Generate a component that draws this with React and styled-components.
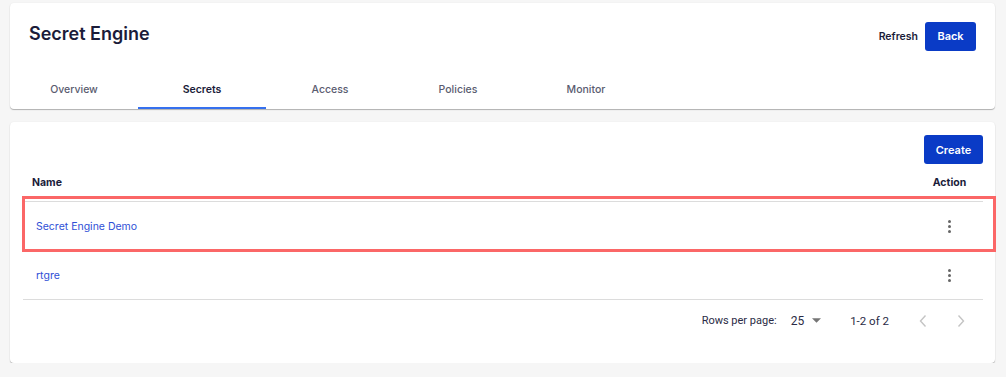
import React from 'react';
import styled, { createGlobalStyle } from 'styled-components';

const GlobalStyle = createGlobalStyle`
  body {
    margin: 0;
    background: #f6f6f6;
    font-family: Inter, "Liberation Sans", sans-serif;
    color: #1b1c3a;
  }
`;

const tabs = ['Overview', 'Secrets', 'Access', 'Policies', 'Monitor'];

const secrets = [
  { name: 'Secret Engine Demo', highlighted: true },
  { name: 'rtgre', highlighted: false },
];

const App = () => {
  return (
    <>
      <GlobalStyle />
      <StyledPage>
        <StyledCard>
          <StyledTopRow>
            <StyledTitle>Secret Engine</StyledTitle>
            <StyledActions>
              <StyledTextButton>Refresh</StyledTextButton>
              <StyledPrimaryButton>Back</StyledPrimaryButton>
            </StyledActions>
          </StyledTopRow>
          <StyledTabs>
            {tabs.map(tab => (
              <StyledTab key={tab} active={tab === 'Secrets'}>
                {tab}
              </StyledTab>
            ))}
          </StyledTabs>
        </StyledCard>

        <StyledTableCard>
          <StyledToolbar>
            <StyledPrimaryButton wide>Create</StyledPrimaryButton>
          </StyledToolbar>
          <StyledHeadRow>
            <StyledHeadCell>Name</StyledHeadCell>
            <StyledHeadCell align="center">Action</StyledHeadCell>
          </StyledHeadRow>
          {secrets.map(secret => (
            <StyledRow key={secret.name} highlighted={secret.highlighted}>
              <StyledLink>{secret.name}</StyledLink>
              <StyledKebab aria-label="more">
                <span />
                <span />
                <span />
              </StyledKebab>
            </StyledRow>
          ))}
          <StyledPagination>
            <span>Rows per page:</span>
            <StyledSelect>
              25
              <svg width="9" height="5" viewBox="0 0 10 5">
                <path d="M0 0 L10 0 L5 5 Z" fill="#757575" />
              </svg>
            </StyledSelect>
            <StyledRange>1-2 of 2</StyledRange>
            <StyledPager>
              <StyledArrow aria-label="previous">
                <svg width="10" height="14" viewBox="0 0 10 14">
                  <path d="M7.5 1.5 L2.5 7 L7.5 12.5" fill="none" stroke="#c4c4c4" strokeWidth="1.4" />
                </svg>
              </StyledArrow>
              <StyledArrow aria-label="next">
                <svg width="10" height="14" viewBox="0 0 10 14">
                  <path d="M2.5 1.5 L7.5 7 L2.5 12.5" fill="none" stroke="#c4c4c4" strokeWidth="1.4" />
                </svg>
              </StyledArrow>
            </StyledPager>
          </StyledPagination>
        </StyledTableCard>
      </StyledPage>
    </>
  );
};

const StyledPage = styled.div`
  display: flex;
  flex-direction: column;
  gap: 13px;
  padding: 3px 11px 0 10px;
`;

const StyledCard = styled.div`
  background: #ffffff;
  border-radius: 4px;
  box-shadow: 0 1px 1px rgba(0, 0, 0, 0.28), 0 0 2px rgba(0, 0, 0, 0.06);
  height: 106px;
  display: flex;
  flex-direction: column;
`;

const StyledTopRow = styled.div`
  height: 66px;
  display: flex;
  align-items: center;
  justify-content: space-between;
  padding: 0 19px;
`;

const StyledTitle = styled.h1`
  margin: -6px 0 0;
  font-size: 18px;
  font-weight: 600;
  color: #1b1c3a;
`;

const StyledActions = styled.div`
  display: flex;
  align-items: center;
  gap: 7px;
`;

const StyledTextButton = styled.button`
  border: none;
  background: none;
  padding: 0;
  font-family: inherit;
  font-size: 10.5px;
  font-weight: 600;
  color: #1b1c3a;
`;

const StyledPrimaryButton = styled.button`
  border: none;
  border-radius: 3px;
  background: #0a3bc6;
  color: #ffffff;
  font-family: inherit;
  font-size: 11px;
  font-weight: 600;
  height: 29px;
  width: ${props => (props.wide ? '59px' : '51px')};
  padding: 0;
`;

const StyledTabs = styled.div`
  display: flex;
  height: 40px;
`;

const StyledTab = styled.div`
  width: 128px;
  display: flex;
  align-items: center;
  justify-content: center;
  font-size: 10.5px;
  font-weight: ${props => (props.active ? 600 : 500)};
  color: ${props => (props.active ? '#1b1c3a' : '#5a5c70')};
  border-bottom: 2px solid ${props => (props.active ? '#3570ee' : 'transparent')};
  box-sizing: border-box;
  padding-top: 2px;
`;

const StyledTableCard = styled.div`
  background: #ffffff;
  border-radius: 4px;
  box-shadow: 0 1px 1px rgba(0, 0, 0, 0.28), 0 0 2px rgba(0, 0, 0, 0.06);
  padding: 13px 12px 22px 13px;
`;

const StyledToolbar = styled.div`
  display: flex;
  justify-content: flex-end;
`;

const StyledHeadRow = styled.div`
  display: grid;
  grid-template-columns: 1fr 64px;
  align-items: center;
  height: 38px;
  border-bottom: 1px solid #dcdcdc;
  box-sizing: border-box;
  padding: 0 0 0 9px;
`;

const StyledHeadCell = styled.div`
  font-size: 10.5px;
  font-weight: 700;
  color: #1b1c3a;
  text-align: ${props => props.align || 'left'};
  padding-right: ${props => (props.align === 'center' ? '3px' : '0')};
`;

const StyledRow = styled.div`
  position: relative;
  display: grid;
  grid-template-columns: 1fr 64px;
  align-items: center;
  height: 49px;
  border-bottom: 1px solid #dcdcdc;
  box-sizing: border-box;
  padding-left: 13px;

  &::after {
    content: '';
    display: ${props => (props.highlighted ? 'block' : 'none')};
    position: absolute;
    top: -6px;
    left: -1px;
    right: -13px;
    bottom: -2px;
    border: 3px solid #fb6767;
    pointer-events: none;
  }
`;

const StyledLink = styled.a`
  font-size: 10.5px;
  color: #2f4fd6;
  text-decoration: none;
`;

const StyledKebab = styled.button`
  justify-self: center;
  margin-right: 4px;
  border: none;
  background: none;
  padding: 0;
  display: flex;
  flex-direction: column;
  gap: 2px;

  span {
    width: 3px;
    height: 3px;
    border-radius: 50%;
    background: #666666;
  }
`;

const StyledPagination = styled.div`
  display: flex;
  align-items: center;
  justify-content: flex-end;
  height: 41px;
  padding-right: 8px;
  font-family: Roboto, "Liberation Sans", sans-serif;
  font-size: 11px;
  color: #2a2b45;
`;

const StyledSelect = styled.div`
  display: flex;
  align-items: center;
  gap: 8px;
  margin-left: 14px;
  font-size: 12px;
`;

const StyledRange = styled.span`
  margin-left: 29px;
  font-size: 11.5px;
`;

const StyledPager = styled.div`
  display: flex;
  gap: 10px;
  margin-left: 20px;
`;

const StyledArrow = styled.button`
  width: 28px;
  height: 28px;
  border: none;
  background: none;
  padding: 0;
  display: flex;
  align-items: center;
  justify-content: center;
`;

export default App;
